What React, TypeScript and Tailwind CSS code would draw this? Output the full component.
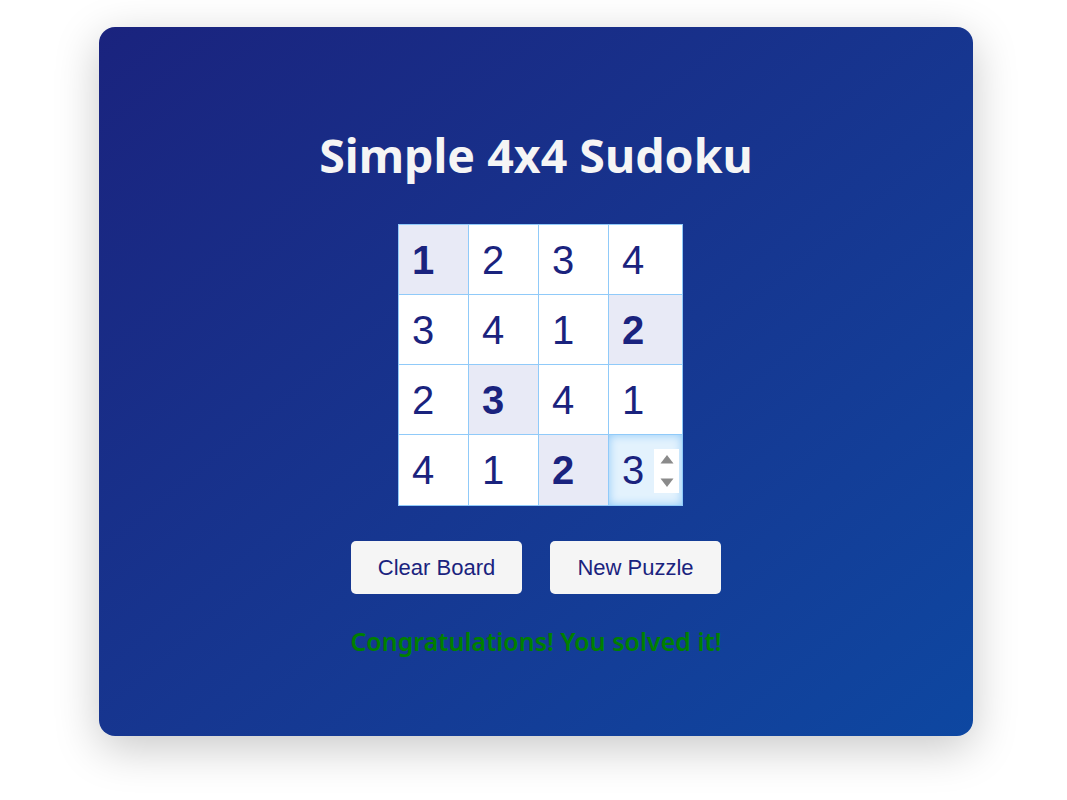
import React from "react";

const board = [
  [1, 2, 3, 4],
  [3, 4, 1, 2],
  [2, 3, 4, 1],
  [4, 1, 2, 3],
];
const fixed = [
  [true, false, false, false],
  [false, false, false, true],
  [false, true, false, false],
  [false, false, true, false],
];

export default function App() {
  return (
    <div className="min-h-[800px] bg-white pt-[27px]">
      <div
        className="ml-[99px] flex h-[709px] w-[874px] flex-col items-center rounded-[16px] bg-linear-to-br from-[#1a237e] to-[#0d47a1] shadow-[0_12px_45px_rgba(0,0,0,0.22)]"
        style={{ fontFamily: '"Noto Sans", "Open Sans", sans-serif' }}
      >
        <h1 className="mt-[98px] text-[46.5px] font-bold leading-[60px] text-[#f5f5f5]">
          Simple 4x4 Sudoku
        </h1>
        <div
          className="ml-[9px] mt-[39px] grid grid-cols-[70px_70px_70px_74px] border-l border-t border-[#90caf9] bg-white"
          style={{ fontFamily: '"Liberation Sans", Arial, sans-serif' }}
        >
          {board.map((row, r) =>
            row.map((v, c) => {
              const isFixed = fixed[r][c];
              const focused = r === 3 && c === 3;
              return (
                <div
                  key={`${r}-${c}`}
                  className={`relative flex items-center border-b border-r border-[#90caf9] pl-[13px] text-[40px] text-[#1a237e] ${
                    r === 3 ? "h-[71px]" : "h-[70px]"
                  } ${isFixed ? "bg-[#e8eaf6] font-bold" : ""} ${
                    focused ? "bg-[#e3f2fd] shadow-[inset_0_0_10px_#90caf9]" : ""
                  }`}
                >
                  <span className="leading-none">{v}</span>
                  {focused && (
                    <div className="absolute right-[3px] top-[14px] flex h-[44px] w-[25px] flex-col items-center justify-between bg-white py-[5px]">
                      <svg width="14" height="10" viewBox="0 0 14 10">
                        <path d="M7 1 L13.5 9.5 L0.5 9.5 Z" fill="#8a8a8a" />
                      </svg>
                      <svg width="14" height="10" viewBox="0 0 14 10">
                        <path d="M0.5 0.5 L13.5 0.5 L7 9 Z" fill="#8a8a8a" />
                      </svg>
                    </div>
                  )}
                </div>
              );
            })
          )}
        </div>
        <div
          className="mt-[35px] flex gap-[28px]"
          style={{ fontFamily: '"Liberation Sans", Arial, sans-serif' }}
        >
          <button className="h-[53px] w-[171px] rounded-[5px] bg-[#f5f5f5] text-[22px] text-[#1a237e]">
            Clear Board
          </button>
          <button className="h-[53px] w-[171px] rounded-[5px] bg-[#f5f5f5] text-[22px] text-[#1a237e]">
            New Puzzle
          </button>
        </div>
        <p className="mt-[29px] text-[25px] font-semibold text-[#008000]">
          Congratulations! You solved it!
        </p>
      </div>
    </div>
  );
}
